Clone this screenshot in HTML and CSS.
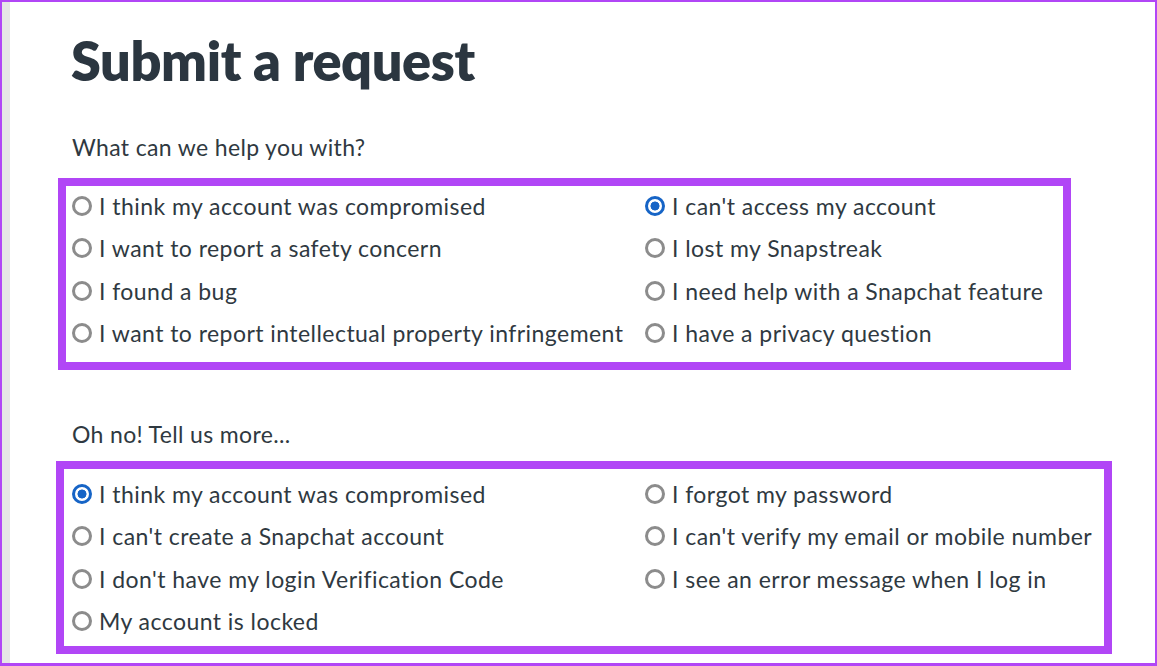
FILE: index.html
```html
<!DOCTYPE html>
<html lang="en">
<head>
<meta charset="utf-8">
<title>Submit a request</title>
<link rel="stylesheet" href="styles.css">
</head>
<body>
<div class="frame">
  <div class="strip"></div>
  <main class="content">
    <h1 class="title">Submit a request</h1>
    <p class="label label-first">What can we help you with?</p>
    <div class="box box-one">
      <div class="grid">
        <label class="opt"><input type="radio" name="q1"><span>I think my account was compromised</span></label>
        <label class="opt"><input type="radio" name="q1" checked><span>I can't access my account</span></label>
        <label class="opt"><input type="radio" name="q1"><span>I want to report a safety concern</span></label>
        <label class="opt"><input type="radio" name="q1"><span>I lost my Snapstreak</span></label>
        <label class="opt"><input type="radio" name="q1"><span>I found a bug</span></label>
        <label class="opt"><input type="radio" name="q1"><span>I need help with a Snapchat feature</span></label>
        <label class="opt"><input type="radio" name="q1"><span>I want to report intellectual property infringement</span></label>
        <label class="opt"><input type="radio" name="q1"><span>I have a privacy question</span></label>
      </div>
    </div>
    <p class="label label-second">Oh no! Tell us more...</p>
    <div class="box box-two">
      <div class="grid">
        <label class="opt"><input type="radio" name="q2" checked><span>I think my account was compromised</span></label>
        <label class="opt"><input type="radio" name="q2"><span>I forgot my password</span></label>
        <label class="opt"><input type="radio" name="q2"><span>I can't create a Snapchat account</span></label>
        <label class="opt"><input type="radio" name="q2"><span>I can't verify my email or mobile number</span></label>
        <label class="opt"><input type="radio" name="q2"><span>I don't have my login Verification Code</span></label>
        <label class="opt"><input type="radio" name="q2"><span>I see an error message when I log in</span></label>
        <label class="opt"><input type="radio" name="q2"><span>My account is locked</span></label>
      </div>
    </div>
  </main>
</div>
</body>
</html>
```
FILE: styles.css
```css
* { box-sizing: border-box; }
html, body { margin: 0; padding: 0; background: #fff; }
body {
  font-family: "Lato", "Open Sans", sans-serif;
  color: #2f3941;
}
.frame {
  width: 1157px;
  height: 666px;
  border: 2px solid #b146f6;
  border-bottom-width: 3px;
  display: flex;
  overflow: hidden;
  background: #fff;
}
.strip {
  width: 8px;
  flex: 0 0 8px;
  background: #e6e6e6;
}
.content {
  flex: 1;
  padding-left: 62px;
  padding-top: 27px;
}
.title {
  margin: 0 0 0 -1px;
  font-size: 54px;
  letter-spacing: -0.4px;
  line-height: 1.2;
  font-weight: 800;
  color: #2b3640;
}
.label {
  margin: 0;
  font-size: 23px;
  letter-spacing: 0.35px;
  line-height: 30px;
}
.label-first { margin-top: 38px; margin-bottom: 16px; }
.label-second { margin-top: 49px; margin-bottom: 12px; }
.box {
  border: 8px solid #b146f6;
}
.box-one {
  width: 1013px;
  margin-left: -14px;
  padding: 0 0 8px 6px;
}
.box-two {
  width: 1056px;
  margin-left: -16px;
  padding: 5px 0 0 8px;
  height: 193px;
}
.grid {
  display: grid;
  grid-template-columns: 573px auto;
  grid-auto-rows: 42.3px;
  margin-top: -1px;
}
.opt {
  display: flex;
  align-items: center;
  gap: 7px;
  font-size: 23px;
  letter-spacing: 0.45px;
  line-height: 30px;
  white-space: nowrap;
}
.opt input {
  appearance: none;
  -webkit-appearance: none;
  margin: 0;
  width: 20px;
  height: 20px;
  flex: 0 0 20px;
  border-radius: 50%;
  border: 3px solid #8c8c8c;
  background: #fff;
}
.opt input:checked {
  border: 3px solid #1664c6;
  background: radial-gradient(circle, #1664c6 0 4.2px, #fff 4.8px);
}
```
